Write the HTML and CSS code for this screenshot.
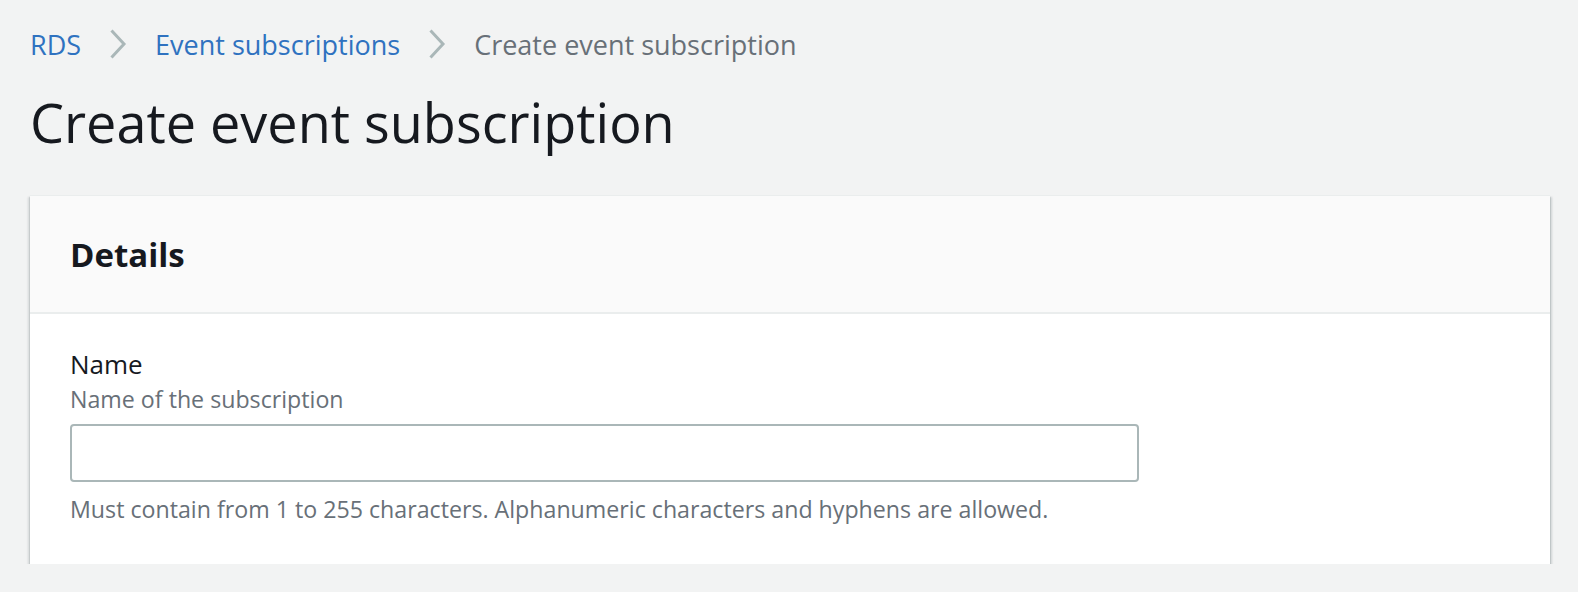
FILE: index.html
```html
<!DOCTYPE html>
<html lang="en">
<head>
<meta charset="utf-8">
<title>Create event subscription</title>
<link rel="stylesheet" href="styles.css">
</head>
<body>
<nav class="crumbs">
  <a class="crumb-link" href="#">RDS</a>
  <svg class="chev" viewBox="0 0 18 30" width="18" height="30"><path d="M2.5 1.5 L15 15 L2.5 28.5" fill="none" stroke="#aab7b8" stroke-width="3"/></svg>
  <a class="crumb-link" href="#">Event subscriptions</a>
  <svg class="chev" viewBox="0 0 18 30" width="18" height="30"><path d="M2.5 1.5 L15 15 L2.5 28.5" fill="none" stroke="#aab7b8" stroke-width="3"/></svg>
  <span class="crumb-current">Create event subscription</span>
</nav>
<h1 class="page-title">Create event subscription</h1>
<section class="card">
  <div class="card-header"><h2 class="card-title">Details</h2></div>
  <div class="card-body">
    <label class="field-label" for="name">Name</label>
    <div class="field-desc">Name of the subscription</div>
    <input class="field-input" id="name" type="text">
    <div class="field-hint">Must contain from 1 to 255 characters. Alphanumeric characters and hyphens are allowed.</div>
  </div>
</section>
</body>
</html>
```
FILE: styles.css
```css
html, body { margin: 0; padding: 0; }
body {
  background: #f2f3f3;
  font-family: "Open Sans", "Noto Sans", sans-serif;
  color: #16191f;
  padding: 0 28px 0 30px;
}
.crumbs {
  display: flex;
  align-items: center;
  height: 40px;
  padding-top: 24px;
  font-size: 27px;
}
.crumb-link { color: #2f72c0; text-decoration: none; }
.crumb-current { color: #687078; }
.chev { margin: 0 28px 0 28px; }
.page-title {
  margin: 18px 0 0 0;
  font-size: 54px;
  font-weight: 400;
  line-height: 80px;
}
.card {
  margin-top: 33px;
  background: #fff;
  border-top: 1px solid #eaeded;
  box-shadow: 0 2px 1px 0 rgba(0,28,36,.45), 2px 2px 2px 0 rgba(0,28,36,.15), -2px 2px 2px 0 rgba(0,28,36,.12);
}
.card-header {
  background: #fafafa;
  height: 116px;
  border-bottom: 2px solid #eaeded;
  display: flex;
  align-items: center;
  padding: 0 40px;
}
.card-title { margin: 0; font-size: 33px; font-weight: 700; }
.card-body { padding: 30px 40px 0 40px; height: 220px; }
.field-label { display: block; font-size: 26px; line-height: 40px; }
.field-desc { font-size: 23.2px; color: #687078; line-height: 30px; }
.field-input {
  display: block;
  box-sizing: border-box;
  width: 1069px;
  height: 58px;
  margin-top: 10px;
  border: 2px solid #aab7b8;
  border-radius: 4px;
  background: #fff;
}
.field-hint { font-size: 23.2px; color: #687078; line-height: 30px; margin-top: 12px; }
```
